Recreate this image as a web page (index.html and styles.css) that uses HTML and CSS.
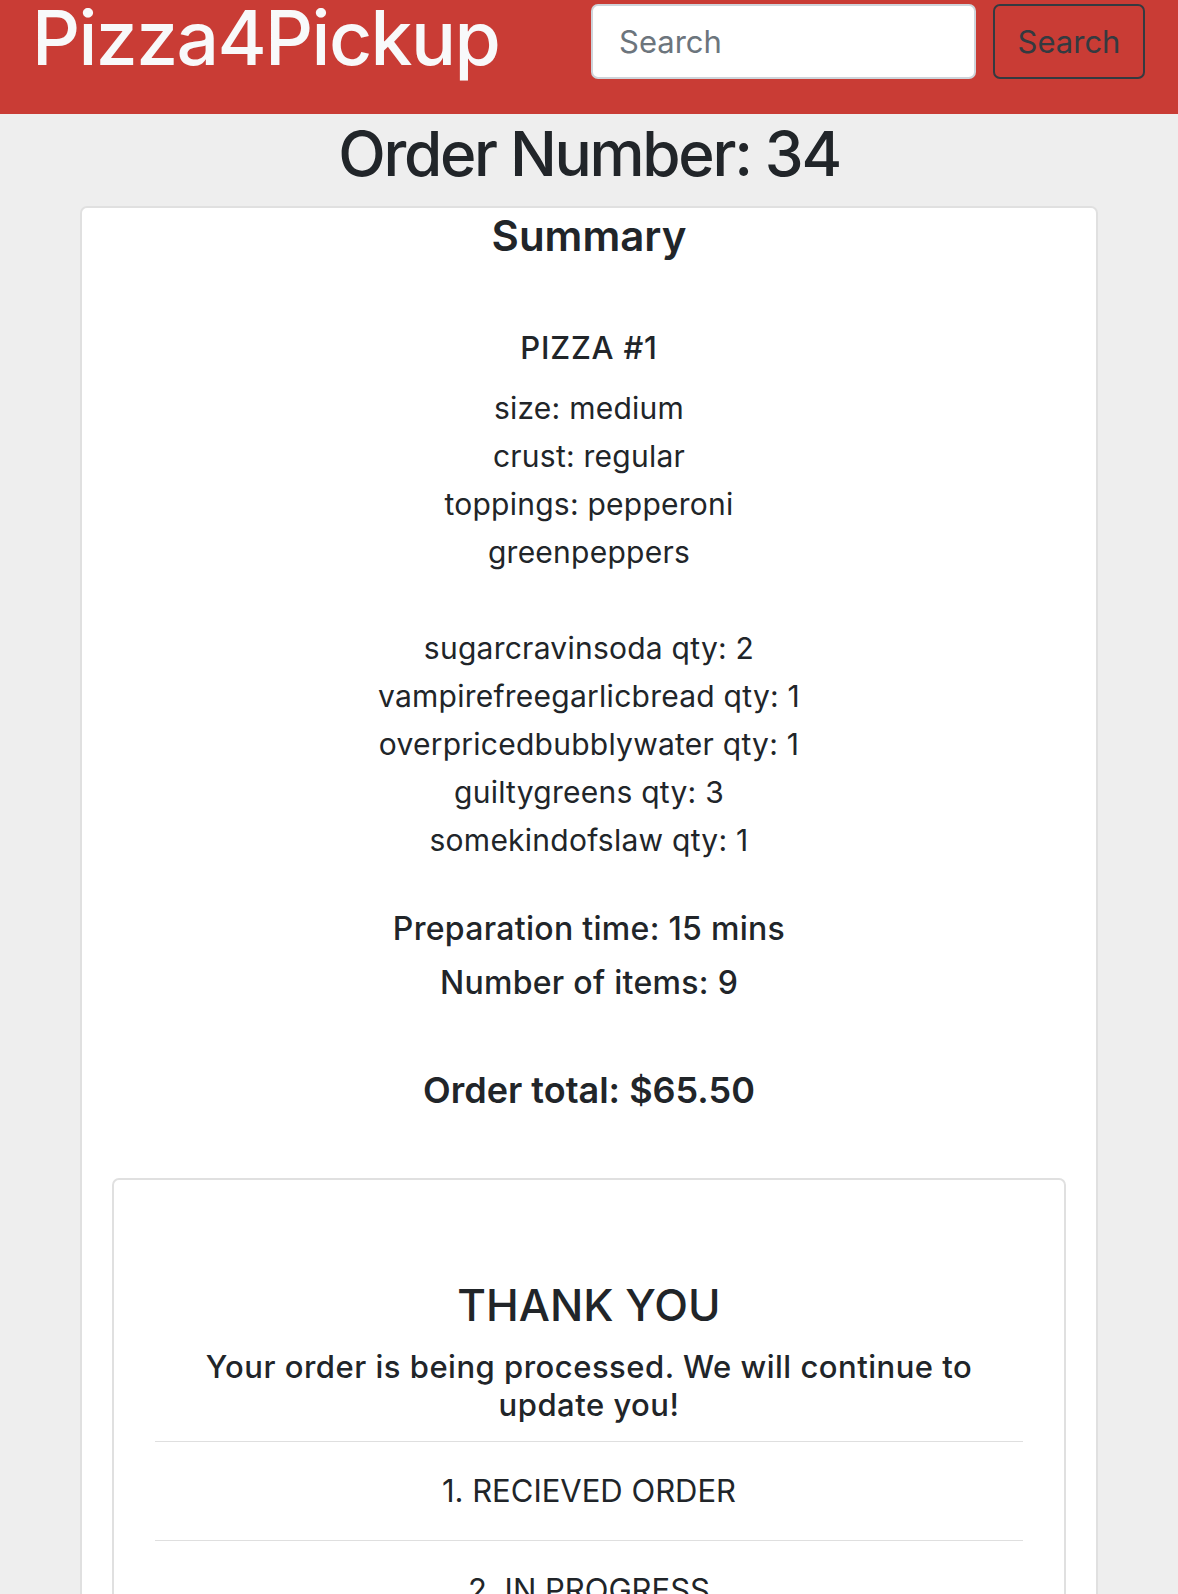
FILE: index.html
```html
<!DOCTYPE html>
<html lang="en">
<head>
<meta charset="utf-8">
<title>Pizza4Pickup - Order 34</title>
<link rel="stylesheet" href="styles.css">
</head>
<body>
<header class="navbar">
  <a class="brand" href="#">Pizza4Pickup</a>
  <form class="search">
    <input class="search-input" type="search" placeholder="Search">
    <button class="search-btn" type="button">Search</button>
  </form>
</header>
<main class="page">
  <h1 class="order-title">Order Number: 34</h1>
  <section class="card summary">
    <h2 class="summary-title">Summary</h2>
    <div class="pizza">
      <h3 class="pizza-title">PIZZA #1</h3>
      <p class="line">size: medium</p>
      <p class="line">crust: regular</p>
      <p class="line">toppings: pepperoni</p>
      <p class="line">greenpeppers</p>
    </div>
    <div class="extras">
      <p class="line">sugarcravinsoda qty: 2</p>
      <p class="line">vampirefreegarlicbread qty: 1</p>
      <p class="line">overpricedbubblywater qty: 1</p>
      <p class="line">guiltygreens qty: 3</p>
      <p class="line">somekindofslaw qty: 1</p>
    </div>
    <div class="meta">
      <p class="meta-line">Preparation time: 15 mins</p>
      <p class="meta-line">Number of items: 9</p>
    </div>
    <h3 class="total">Order total: $65.50</h3>
    <div class="card status">
      <h2 class="status-title">THANK YOU</h2>
      <p class="status-text">Your order is being processed. We will continue to update you!</p>
      <ul class="steps">
        <li class="step">1. RECIEVED ORDER</li>
        <li class="step">2. IN PROGRESS</li>
        <li class="step">3. READY FOR PICKUP</li>
      </ul>
    </div>
  </section>
</main>
</body>
</html>
```
FILE: styles.css
```css
* { box-sizing: border-box; }

html, body {
  margin: 0;
  padding: 0;
}

body {
  background: #eeeeee;
  color: #212529;
  font-family: Inter, "Noto Sans", "Liberation Sans", sans-serif;
}

.navbar {
  height: 114px;
  background: #c93c35;
  display: flex;
  align-items: flex-start;
  justify-content: space-between;
  padding: 0 33px 0 32px;
}

.brand {
  font-size: 75px;
  line-height: 75px;
  font-weight: 500;
  color: #f8f9fa;
  text-decoration: none;
  letter-spacing: -1.6px;
}

.search {
  display: flex;
  gap: 17px;
  margin-top: 4px;
}

.search-input {
  width: 385px;
  height: 75px;
  border: 2px solid #ced4da;
  border-radius: 7px;
  background: #fff;
  padding: 0 26px;
  font-family: inherit;
  font-size: 31px;
  color: #495057;
  outline: none;
}

.search-input::placeholder {
  color: #6c757d;
}

.search-btn {
  width: 152px;
  height: 75px;
  border: 2px solid #343a40;
  border-radius: 7px;
  background: transparent;
  color: #343a40;
  font-family: inherit;
  font-size: 31px;
  padding: 0;
}

.page {
  padding-top: 3px;
}

.order-title {
  margin: 0 0 15px;
  text-align: center;
  font-size: 62px;
  line-height: 1.2;
  font-weight: 500;
  letter-spacing: -2.3px;
}

.card {
  background: #fff;
  border: 2px solid #e0e0e0;
  border-radius: 7px;
}

.summary {
  width: 1018px;
  margin: 0 auto;
  padding: 3px 30px 0;
  text-align: center;
  min-height: 1400px;
}

.summary-title {
  margin: 0 0 62px;
  font-size: 42px;
  line-height: 1.2;
  font-weight: 600;
}

.pizza-title {
  margin: 0 0 12px;
  font-size: 31px;
  line-height: 48px;
  font-weight: 500;
  letter-spacing: 0.8px;
}

.line {
  margin: 0;
  font-size: 30px;
  line-height: 48px;
  letter-spacing: 0.25px;
}

.extras {
  margin-top: 48px;
}

.meta {
  margin-top: 38px;
}

.meta-line {
  margin: 0;
  font-size: 32px;
  line-height: 54px;
  font-weight: 500;
  letter-spacing: 0.3px;
}

.total {
  margin: 59px 0 66px;
  font-size: 36px;
  line-height: 1.2;
  font-weight: 600;
}

.status {
  padding: 99px 41px 0;
  min-height: 600px;
}

.status-title {
  margin: 0 0 16px;
  font-size: 44px;
  line-height: 1.2;
  font-weight: 500;
}

.status-text {
  margin: 0 0 17px;
  font-size: 31px;
  line-height: 38px;
  font-weight: 500;
  letter-spacing: 0.5px;
}

.steps {
  list-style: none;
  margin: 0;
  padding: 0;
}

.step {
  border-top: 1px solid #dfdfdf;
  padding: 31px 0;
  font-size: 31px;
  line-height: 36px;
}
```
